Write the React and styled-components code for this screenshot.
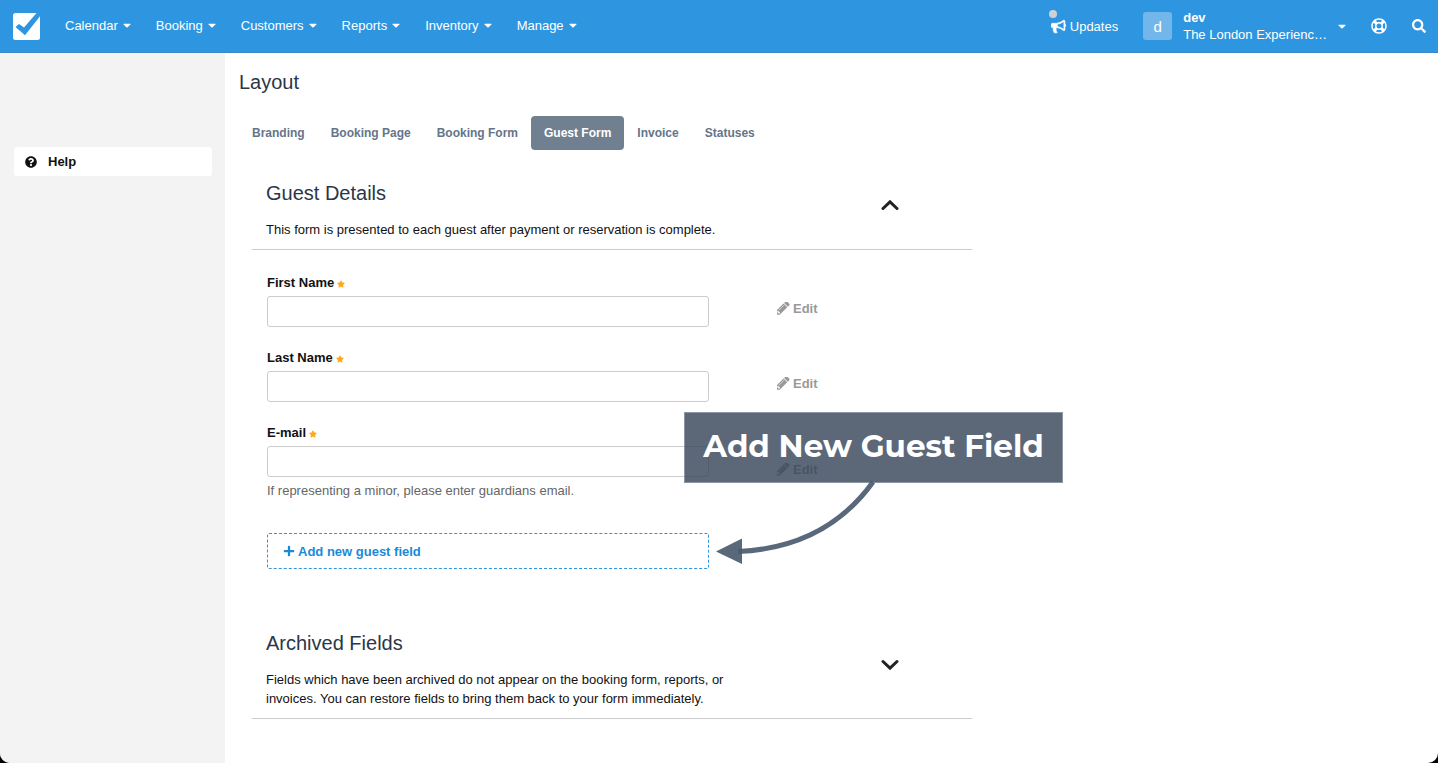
import React, { useState } from 'react';
import styled, { createGlobalStyle } from 'styled-components';
import {
  FaPlus,
  FaQuestionCircle,
  FaRegLifeRing,
  FaSearch,
  FaStar,
} from 'react-icons/fa';

const GlobalStyle = createGlobalStyle`
  * {
    box-sizing: border-box;
  }

  body {
    margin: 0;
    background-color: #000;
    color: #111;
    font-family: "Liberation Sans", Arial, sans-serif;
    font-size: 13px;
    line-height: 19px;
  }

  button, input {
    font: inherit;
  }
`;

const Page = styled.div`
  display: flex;
  flex-direction: column;
  min-height: 100vh;
  background-color: #fff;
  border-radius: 0 0 10px 10px;
  overflow: hidden;
`;

const TopBar = styled.header`
  display: flex;
  align-items: center;
  height: 53px;
  padding: 0 12px 0 13px;
  background-color: #2e96e0;
  border-bottom: 1px solid #3a88c8;
  color: #fff;
`;

const LogoLink = styled.a`
  display: flex;
  margin-right: 25px;
`;

const Nav = styled.nav`
  display: flex;
  gap: 25px;
  padding-bottom: 2px;
`;

const BarButton = styled.button`
  display: flex;
  align-items: center;
  gap: ${props => props.$gap || 0}px;
  padding: 0;
  border: none;
  background: none;
  color: #fff;
  text-align: left;
  cursor: pointer;
`;

const BarRight = styled.div`
  display: flex;
  align-items: center;
  gap: 25px;
  margin-left: auto;
`;

const UpdatesIcon = styled.span`
  position: relative;
  display: flex;
`;

const UpdatesDot = styled.span`
  position: absolute;
  top: -9px;
  left: -2px;
  width: 8px;
  height: 8px;
  border-radius: 50%;
  background-color: #cfd0d6;
`;

const Avatar = styled.span`
  display: flex;
  align-items: center;
  justify-content: center;
  width: 29px;
  height: 28px;
  border-radius: 3px;
  background-color: #73b7ea;
  font-size: 15px;
`;

const AccountText = styled.span`
  display: flex;
  flex-direction: column;
  line-height: 17px;
`;

const Body = styled.div`
  display: flex;
  flex: 1;
`;

const Sidebar = styled.aside`
  flex: none;
  width: 225px;
  padding: 94px 13px 0 14px;
  background-color: #f3f3f3;
`;

const HelpLink = styled.a`
  display: flex;
  align-items: center;
  gap: 11px;
  height: 29px;
  padding: 0 11px;
  border-radius: 3px;
  background-color: #fff;
  color: #111;
  font-weight: bold;
  text-decoration: none;
`;

const Main = styled.main`
  flex: 1;
  padding: 17px 14px 44px;
`;

const PageTitle = styled.h1`
  margin: 0 0 22px;
  color: #2b3648;
  font-size: 20px;
  font-weight: normal;
  line-height: 24px;
`;

const Tabs = styled.nav`
  display: flex;
`;

const Tab = styled.a`
  display: flex;
  align-items: center;
  height: 34px;
  padding: 0 13px;
  border-radius: 4px;
  background-color: ${props => (props.$active ? '#718091' : 'transparent')};
  color: ${props => (props.$active ? '#fff' : '#64758a')};
  font-size: 12px;
  font-weight: bold;
  text-decoration: none;
`;

const Section = styled.section`
  max-width: 720px;
  margin-left: 13px;
`;

const SectionHeader = styled.div`
  display: grid;
  grid-template-columns: 1fr 136px;
  margin-top: ${props => props.$space}px;
  padding: 0 14px 10px;
  border-bottom: 1px solid #ccc;
`;

const SectionTitle = styled.h2`
  margin: 0 0 15px;
  color: #2b3648;
  font-size: 20px;
  font-weight: normal;
  line-height: 24px;
`;

const SectionText = styled.p`
  max-width: 468px;
  margin: 0;
`;

const ToggleButton = styled.button`
  display: flex;
  align-items: center;
  justify-content: center;
  padding: 0 0 10px;
  border: none;
  background: none;
  color: #222;
  cursor: pointer;
`;

const GuestForm = styled.form`
  position: relative;
  padding: 23px 15px 0;
`;

const FieldRow = styled.div`
  display: flex;
  align-items: center;
  gap: 68px;
  margin-bottom: ${props => (props.$last ? 33 : 21)}px;
`;

const Field = styled.div`
  width: 442px;
`;

const FieldLabel = styled.label`
  display: flex;
  align-items: center;
  gap: 3px;
  margin-bottom: 4px;
  font-weight: bold;

  svg {
    margin-top: 2px;
    color: #ffa81a;
  }
`;

const TextInput = styled.input`
  display: block;
  width: 100%;
  height: 31px;
  padding: 0 8px;
  border: 1px solid #ccc;
  border-radius: 3px;
  background-color: #fff;
`;

const FieldHint = styled.p`
  margin: 4px 0 0;
  color: #666;
`;

const EditButton = styled.button`
  display: flex;
  align-items: center;
  gap: 3px;
  padding: 16px 0 0;
  border: none;
  background: none;
  color: #999;
  font-weight: bold;
  cursor: pointer;
`;

const AddButton = styled.button`
  display: flex;
  align-items: center;
  gap: 3px;
  width: 442px;
  height: 36px;
  padding: 0 15px;
  border: 1px dashed #2e96e0;
  border-radius: 2px;
  background: none;
  color: #1a8ad8;
  font-weight: bold;
  cursor: pointer;
`;

// Sits over the form and points at the add button
const Callout = styled.div`
  position: absolute;
  top: 162px;
  left: 432px;
  display: flex;
  align-items: center;
  justify-content: center;
  width: 379px;
  height: 71px;
  padding-bottom: 2px;
  border: 1px solid #8d97a3;
  background-color: rgba(51, 66, 86, 0.8);
  color: #fff;
  font-family: Montserrat, Inter, "Open Sans", sans-serif;
  font-size: 31px;
  font-weight: 700;
  white-space: nowrap;
`;

const CalloutArrow = styled.svg`
  position: absolute;
  top: 230px;
  left: 464px;
`;

const Caret = () => (
  <svg width="8" height="5" viewBox="0 0 8 5" fill="currentColor" aria-hidden="true">
    <path d="M0.8 0.8H7.2Q8 0.9 7.4 1.5L4.6 4.2Q4 4.7 3.4 4.2L0.6 1.5Q0 0.9 0.8 0.8Z" />
  </svg>
);

const Chevron = ({ open }) => (
  <svg width="18" height="12" viewBox="0 0 18 12" fill="none" aria-hidden="true">
    <path
      d={open ? 'M2 9.5L9 2.8L16 9.5' : 'M2 2.5L9 9.2L16 2.5'}
      stroke="currentColor"
      strokeWidth="3"
      strokeLinecap="round"
    />
  </svg>
);

const Logo = () => (
  <svg width="27" height="27" viewBox="0 0 27 27" aria-hidden="true">
    <rect width="27" height="27" rx="2.5" fill="#fff" />
    <path d="M2.5 14L6 11L11 14.5L23.5 0H27V3.2L12 22.3Z" fill="#2e96e0" />
  </svg>
);

const Bullhorn = () => (
  <svg
    width="15"
    height="15"
    viewBox="0 0 1792 1792"
    fill="currentColor"
    stroke="currentColor"
    strokeWidth="70"
    aria-hidden="true"
  >
    <path d="M1664 640q53 0 90.5 37.5t37.5 90.5-37.5 90.5-90.5 37.5v384q0 52-38 90t-90 38q-417-347-812-380-58 19-91 66t-31 100.5 40 92.5q-20 33-23 65.5t6 58 33.5 55 48 50 61.5 50.5q-29 58-111.5 83t-168.5 11.5-132-55.5q-7-23-29.5-87.5t-32-94.5-23-89-15-101 3.5-98.5 22-110.5h-122q-66 0-113-47t-47-113v-192q0-66 47-113t113-47h480q435 0 896-384 52 0 90 38t38 90v384zm-128 604v-954q-394 302-768 343v270q377 42 768 341z" />
  </svg>
);

const Pencil = () => (
  <svg width="13" height="13" viewBox="256 236 1408 1448" fill="currentColor" aria-hidden="true">
    <path d="M491 1536l91-91-235-235-91 91v107h128v128h107zm523-928q0-22-22-22-10 0-17 7l-542 542q-7 7-7 17 0 22 22 22 10 0 17-7l542-542q7-7 7-17zm-54-192l416 416-832 832h-416v-416zm683 96q0 53-37 90l-166 166-416-416 166-165q36-38 90-38 53 0 91 38l235 234q37 39 37 91z" />
  </svg>
);

const menus = ['Calendar', 'Booking', 'Customers', 'Reports', 'Inventory', 'Manage'];

const tabs = ['Branding', 'Booking Page', 'Booking Form', 'Guest Form', 'Invoice', 'Statuses'];

const fields = [
  { id: 'first-name', label: 'First Name', type: 'text' },
  { id: 'last-name', label: 'Last Name', type: 'text' },
  {
    id: 'email',
    label: 'E-mail',
    type: 'email',
    hint: 'If representing a minor, please enter guardians email.',
  },
];

const App = () => {
  const [activeTab, setActiveTab] = useState('Guest Form');
  const [detailsOpen, setDetailsOpen] = useState(true);
  const [archivedOpen, setArchivedOpen] = useState(false);

  return (
    <>
      <GlobalStyle />
      <Page>
        <TopBar>
          <LogoLink href="#" aria-label="Home">
            <Logo />
          </LogoLink>
          <Nav>
            {menus.map((menu) => (
              <BarButton key={menu} type="button" $gap={5}>
                {menu}
                <Caret />
              </BarButton>
            ))}
          </Nav>
          <BarRight>
            <BarButton type="button" $gap={4}>
              <UpdatesIcon>
                <Bullhorn />
                <UpdatesDot />
              </UpdatesIcon>
              Updates
            </BarButton>
            <BarButton type="button" $gap={11}>
              <Avatar>d</Avatar>
              <AccountText>
                <b>dev</b>
                <span>The London Experienc…</span>
              </AccountText>
              <Caret />
            </BarButton>
            <BarButton type="button" aria-label="Support">
              <FaRegLifeRing size={16} />
            </BarButton>
            <BarButton type="button" aria-label="Search">
              <FaSearch size={14} />
            </BarButton>
          </BarRight>
        </TopBar>
        <Body>
          <Sidebar>
            <HelpLink href="#help">
              <FaQuestionCircle size={12} />
              Help
            </HelpLink>
          </Sidebar>
          <Main>
            <PageTitle>Layout</PageTitle>
            <Tabs>
              {tabs.map((tab) => (
                <Tab key={tab} href="#" $active={tab === activeTab} onClick={() => setActiveTab(tab)}>
                  {tab}
                </Tab>
              ))}
            </Tabs>
            <Section>
              <SectionHeader $space={31}>
                <div>
                  <SectionTitle>Guest Details</SectionTitle>
                  <SectionText>
                    This form is presented to each guest after payment or reservation is complete.
                  </SectionText>
                </div>
                <ToggleButton
                  type="button"
                  aria-label="Toggle guest details"
                  onClick={() => setDetailsOpen(!detailsOpen)}
                >
                  <Chevron open={detailsOpen} />
                </ToggleButton>
              </SectionHeader>
              {detailsOpen && (
                <GuestForm>
                  {fields.map((field, index) => (
                    <FieldRow key={field.id} $last={index === fields.length - 1}>
                      <Field>
                        <FieldLabel htmlFor={field.id}>
                          {field.label}
                          <FaStar size={8} />
                        </FieldLabel>
                        <TextInput id={field.id} type={field.type} />
                        {field.hint && <FieldHint>{field.hint}</FieldHint>}
                      </Field>
                      <EditButton type="button">
                        <Pencil />
                        Edit
                      </EditButton>
                    </FieldRow>
                  ))}
                  <AddButton type="button">
                    <FaPlus size={12} />
                    Add new guest field
                  </AddButton>
                  <Callout>Add New Guest Field</Callout>
                  <CalloutArrow width="162" height="86" viewBox="0 0 162 86" aria-hidden="true">
                    <path
                      d="M157 2C126 45 82 69 22 71.5"
                      fill="none"
                      stroke="#4b5b70"
                      strokeOpacity="0.92"
                      strokeWidth="5"
                    />
                    <path d="M0 71.5L26 58.5V84Z" fill="#4b5b70" fillOpacity="0.92" />
                  </CalloutArrow>
                </GuestForm>
              )}
            </Section>
            <Section>
              <SectionHeader $space={62}>
                <div>
                  <SectionTitle>Archived Fields</SectionTitle>
                  <SectionText>
                    Fields which have been archived do not appear on the booking form, reports, or
                    invoices. You can restore fields to bring them back to your form immediately.
                  </SectionText>
                </div>
                <ToggleButton
                  type="button"
                  aria-label="Toggle archived fields"
                  onClick={() => setArchivedOpen(!archivedOpen)}
                >
                  <Chevron open={archivedOpen} />
                </ToggleButton>
              </SectionHeader>
            </Section>
          </Main>
        </Body>
      </Page>
    </>
  );
};

export default App;
